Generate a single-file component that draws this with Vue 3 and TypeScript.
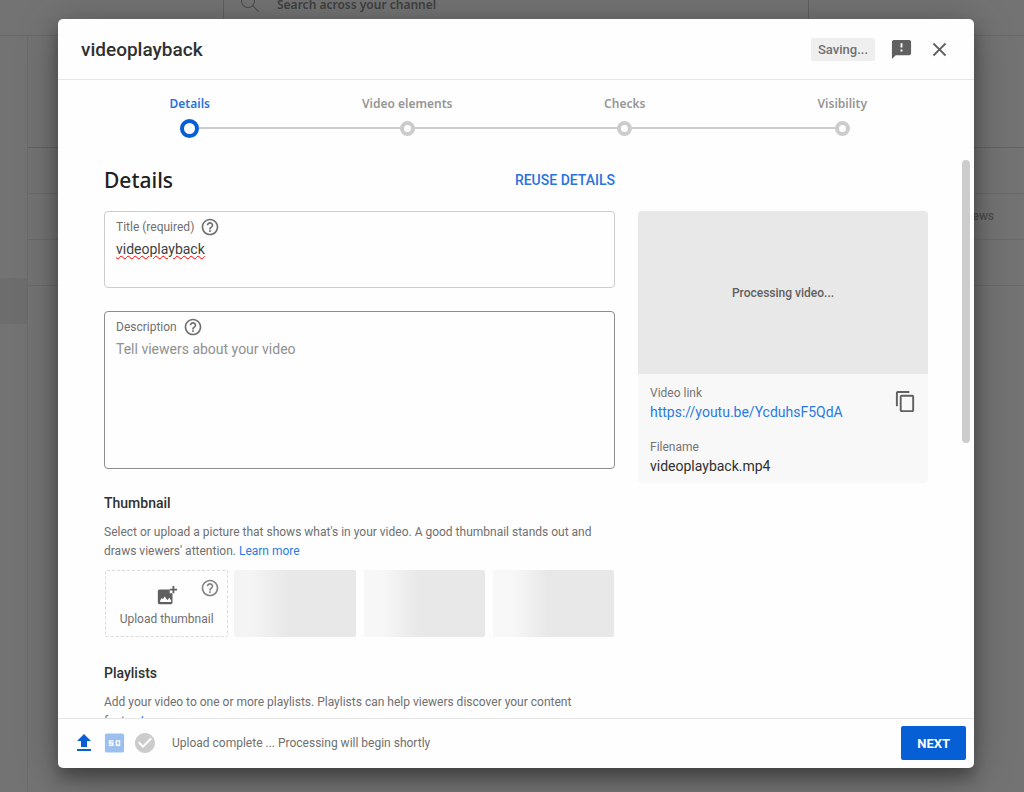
<script setup lang="ts">
import { ref } from 'vue'

interface Step { label: string; active: boolean }

const steps: Step[] = [
  { label: 'Details', active: true },
  { label: 'Video elements', active: false },
  { label: 'Checks', active: false },
  { label: 'Visibility', active: false },
]
const title = ref('videoplayback')
const description = ref('')
const fileName = 'videoplayback.mp4'
const link = 'https://youtu.be/YcduhsF5QdA'
const helpPath = 'M11 18h2v-2h-2v2zm1-16C6.48 2 2 6.48 2 12s4.48 10 10 10 10-4.48 10-10S17.52 2 12 2zm0 18c-4.41 0-8-3.59-8-8s3.59-8 8-8 8 3.59 8 8-3.59 8-8 8zm0-14c-2.21 0-4 1.79-4 4h2c0-1.1.9-2 2-2s2 .9 2 2c0 2-3 1.75-3 5h2c0-2.25 3-2.5 3-5 0-2.21-1.79-4-4-4z'
</script>

<template>
  <div class="studio">
    <div class="page" aria-hidden="true">
      <div class="topbar">
        <div class="search">
          <svg viewBox="0 0 24 24" class="lens"><path d="M20.87 20.17l-5.59-5.59C16.35 13.35 17 11.75 17 10c0-3.87-3.13-7-7-7s-7 3.13-7 7 3.13 7 7 7c1.75 0 3.35-.65 4.58-1.71l5.59 5.59.7-.71zM10 16c-3.31 0-6-2.69-6-6s2.69-6 6-6 6 2.69 6 6-2.69 6-6 6z" /></svg>
          <span>Search across your channel</span>
        </div>
      </div>
      <div class="workspace">
        <div class="rail"><div class="rail-item"></div></div>
        <div class="table">
          <div class="band band-tall"></div>
          <div class="band"></div>
          <div class="band band-head">Views</div>
          <div class="band"></div>
        </div>
      </div>
    </div>

    <div class="overlay">
      <section class="dialog" role="dialog" aria-labelledby="dialog-title">
        <header class="head">
          <h1 id="dialog-title">{{ title }}</h1>
          <span class="saving">Saving...</span>
          <button class="icon-btn feedback" aria-label="Send feedback">
            <svg viewBox="0 0 24 24"><path d="M20 2H4c-1.1 0-2 .9-2 2v18l4-4h14c1.1 0 2-.9 2-2V4c0-1.1-.9-2-2-2zm-7 12h-2v-2h2v2zm0-4h-2V5.500h2V10z" /></svg>
          </button>
          <button class="icon-btn" aria-label="Close">
            <svg viewBox="0 0 24 24"><path d="M19 6.410L17.590 5 12 10.590 6.410 5 5 6.410 10.590 12 5 17.590 6.410 19 12 13.410 17.590 19 19 17.590 13.410 12z" /></svg>
          </button>
        </header>

        <ol class="stepper">
          <li v-for="s in steps" :key="s.label" :class="{ active: s.active }">
            <button>{{ s.label }}</button>
            <span class="track"><i></i><b></b><i></i></span>
          </li>
        </ol>

        <div class="body">
          <div class="scroller">
            <div class="title-row">
              <h2>Details</h2>
              <button class="reuse">REUSE DETAILS</button>
            </div>
            <div class="columns">
              <div class="main">
                <div class="field">
                  <div class="field-label">
                    <label for="title">Title (required)</label>
                    <svg viewBox="0 0 24 24" class="help"><path :d="helpPath" /></svg>
                  </div>
                  <textarea id="title" v-model="title" class="title-input" spellcheck="false"></textarea>
                </div>
                <div class="field strong">
                  <div class="field-label">
                    <label for="desc">Description</label>
                    <svg viewBox="0 0 24 24" class="help"><path :d="helpPath" /></svg>
                  </div>
                  <textarea id="desc" v-model="description" class="desc-input" placeholder="Tell viewers about your video"></textarea>
                </div>

                <h3>Thumbnail</h3>
                <p>Select or upload a picture that shows what's in your video. A good thumbnail stands out and draws viewers' attention. <a href="#">Learn more</a></p>
                <div class="thumbs">
                  <button class="upload">
                    <svg viewBox="0 0 24 24" class="add-photo"><path d="M18 12.500V19c0 1.100-.9 2-2 2H4c-1.100 0-2-.9-2-2V7c0-1.100.9-2 2-2h11v4h3zM4.500 18.500h12v-1.500l-2-3-2 2.500-3-4-2 3-1-1.500-2 3z" fill-rule="evenodd" /><path d="M18 1h2v3h3v2h-3v3h-2V6h-3V4h3z" /></svg>
                    <span>Upload thumbnail</span>
                    <svg viewBox="0 0 24 24" class="help corner"><path :d="helpPath" /></svg>
                  </button>
                  <div v-for="n in 3" :key="n" class="thumb" :class="'thumb-' + n"></div>
                </div>

                <h3>Playlists</h3>
                <p>Add your video to one or more playlists. Playlists can help viewers discover your content faster. <a href="#">Learn more</a></p>
              </div>

              <aside class="preview">
                <div class="player">Processing video...</div>
                <div class="info">
                  <div class="info-row">
                    <div>
                      <div class="caption">Video link</div>
                      <a class="value" href="#">{{ link }}</a>
                    </div>
                    <button class="icon-btn copy" aria-label="Copy video link">
                      <svg viewBox="0 0 24 24"><path d="M16 1H4c-1.100 0-2 .9-2 2v14h2V3h12V1zm3 4H8c-1.100 0-2 .9-2 2v14c0 1.100.9 2 2 2h11c1.100 0 2-.9 2-2V7c0-1.100-.9-2-2-2zm0 16H8V7h11v14z" /></svg>
                    </button>
                  </div>
                  <div class="file">
                    <div class="caption">Filename</div>
                    <div class="value">{{ fileName }}</div>
                  </div>
                </div>
              </aside>
            </div>
          </div>
          <div class="scroll-rail"><div class="scroll-thumb"></div></div>
        </div>

        <footer class="foot">
          <svg viewBox="0 0 24 24" class="status up"><path d="M5 20h14v-2H5v2zm0-10h4v6h6v-6h4l-7-7-7 7z" /></svg>
          <svg viewBox="0 0 24 24" class="status sd"><rect x="2" y="2" width="20" height="20" rx="2" /><path d="M11 9.700H6.700V12H10.300V14.300H6M14 9.700h3.300v4.600H14z" fill="none" stroke="#fff" stroke-width="1.400" /></svg>
          <svg viewBox="0 0 24 24" class="status done"><path d="M12 2C6.480 2 2 6.480 2 12s4.480 10 10 10 10-4.480 10-10S17.520 2 12 2zm-2 15l-5-5 1.410-1.410L10 14.170l7.590-7.590L19 8l-9 9z" /></svg>
          <span class="message">Upload complete ... Processing will begin shortly</span>
          <button class="next">NEXT</button>
        </footer>
      </section>
    </div>
  </div>
</template>

<style>
body { margin: 0; }
</style>

<style scoped>
* { box-sizing: border-box; }
button { font: inherit; color: inherit; background: none; border: 0; padding: 0; margin: 0; cursor: pointer; }
a { color: #2a7ae2; text-decoration: none; }
svg { display: block; fill: currentColor; flex: none; }
h1, h2, h3, p, ol { margin: 0; padding: 0; }

.studio { position: relative; height: 100vh; min-height: 600px; overflow: hidden; font-family: Roboto, "Liberation Sans", sans-serif; color: #606060; background: #737373; }

.page { height: 100%; display: flex; flex-direction: column; }
.topbar { height: 36px; flex: none; padding: 0 215px 0 223px; border-bottom: 1px solid #686868; }
.search { height: 35px; display: flex; gap: 15px; padding-left: 14px; border: 1px solid #5e5e5e; border-width: 0 1px; font: 600 12px/20px "Noto Sans", sans-serif; color: #404040; }
.search span { margin-top: -5px; }
.lens { width: 24px; height: 24px; margin-top: -9px; color: #4b4b4b; }
.workspace { flex: 1; display: flex; }
.rail { width: 28px; border-right: 1px solid #6b6b6b; padding-top: 242px; }
.rail-item { height: 46px; background: #6d6d6d; }
.table { flex: 1; }
.band { height: 46px; border-bottom: 1px solid #6a6a6a; }
.band-tall { height: 112px; border-color: #636363; }
.band-head { padding-right: 30px; text-align: right; font-size: 12px; font-weight: 500; line-height: 44px; color: #4c4c4c; }

.overlay { position: absolute; inset: 0; padding: 19px 50px 24px 58px; }
.dialog { height: 100%; display: flex; flex-direction: column; background: #fefefe; border-radius: 5px; overflow: hidden; box-shadow: 0 10px 16px rgba(0, 0, 0, .3), 0 6px 40px rgba(0, 0, 0, .27); }

.head { height: 61px; flex: none; display: flex; align-items: center; padding: 0 23px; border-bottom: 1px solid #e5e5e5; }
h1 { flex: 1; font-size: 19px; font-weight: 500; color: #303030; }
.saving { padding: 0 7px; line-height: 23px; font-size: 13px; font-weight: 500; color: #707070; background: #efefef; border-radius: 2px; }
.icon-btn { color: #606060; }
.icon-btn svg { width: 23px; height: 23px; }
.feedback { margin: 0 15px; }

.stepper { flex: none; height: 66px; display: grid; grid-template-columns: repeat(4, 1fr); padding: 14px 23px 0; list-style: none; }
li { display: flex; flex-direction: column; align-items: center; gap: 4px; }
li button { font: 600 12px/20px "Noto Sans", sans-serif; color: #969696; }
.track { align-self: stretch; height: 20px; display: flex; align-items: center; }
.track i { flex: 1; height: 2px; background: #ccc; }
.track b { width: 15px; height: 15px; border: 4px solid #ccc; border-radius: 50%; }
li:first-child i:first-child, li:last-child i:last-child { background: none; }
li.active button { color: #2a72dc; }
li.active b { width: 19px; height: 19px; border-color: #065fd4; }

.body { flex: 1; min-height: 0; display: flex; }
.scroller { flex: 1; min-width: 0; overflow: hidden; padding: 19px 34px 0 46px; }
.scroll-rail { width: 12px; padding: 14px 3px 0 0; }
.scroll-thumb { width: 8px; height: 283px; border-radius: 4px; background: #ccc; }
.title-row { display: flex; justify-content: space-between; align-items: center; width: calc(100% - 313px); height: 30px; margin-bottom: 16px; }
h2 { font: 500 21px/30px "Noto Sans", sans-serif; color: #202020; }
.reuse { font-size: 14px; font-weight: 500; color: #2a72dc; }
.columns { display: grid; grid-template-columns: 1fr 290px; gap: 23px; align-items: start; }

.field { border: 1px solid #ccc; border-radius: 4px; padding: 6px 11px 0; margin-bottom: 23px; }
.field.strong { border-color: #8d8d8d; }
.field-label { display: flex; align-items: center; gap: 6px; height: 18px; font-size: 12px; color: #707070; }
.help { width: 20px; height: 20px; }
textarea { display: block; width: 100%; padding: 0; border: 0; outline: 0; resize: none; background: none; font: 14px/22px Roboto, sans-serif; color: #404040; }
textarea::placeholder { color: #909090; opacity: 1; }
.title-input { height: 49px; margin-top: 2px; text-decoration: underline wavy #f00 1px; text-underline-offset: 1px; }
.desc-input { height: 130px; margin-top: 2px; }

h3 { font-size: 14px; font-weight: 500; line-height: 22px; color: #303030; }
p { font-size: 12px; line-height: 19px; margin-top: 9px; padding-right: 16px; color: #707070; }
.thumbs { display: grid; grid-template-columns: repeat(4, 1fr); gap: 8px; padding: 0 1px; margin: 9px 0 25px; }
.upload { position: relative; width: calc(100% + 2px); height: 67px; display: flex; flex-direction: column; align-items: center; gap: 3px; padding-top: 14px; border: 1px dashed #dadada; border-radius: 2px; font-size: 12px; line-height: 18px; color: #707070; }
.add-photo { width: 22px; height: 22px; color: #606060; }
.corner { position: absolute; top: 7px; right: 7px; color: #858585; }
.thumb { height: 67px; border-radius: 2px; }
.thumb-1 { background: linear-gradient(90deg, #f4f4f4 15%, #e8e8e8 45%); }
.thumb-2 { background: linear-gradient(90deg, #f7f7f7 15%, #e8e8e8 45%); }
.thumb-3 { background: linear-gradient(90deg, #f8f8f8 15%, #e8e8e8 45%); }

.preview { border-radius: 4px; overflow: hidden; background: #f8f8f8; }
.player { height: 163px; display: flex; align-items: center; justify-content: center; background: #e8e8e8; font-size: 12px; font-weight: 500; }
.info { padding: 10px 11px 7px 12px; }
.info-row { display: flex; justify-content: space-between; align-items: flex-start; }
.copy { margin-top: 6px; }
.caption { font-size: 12px; line-height: 18px; color: #757575; }
.value { display: block; font-size: 14px; line-height: 20px; }
div.value { color: #303030; }
.file { margin-top: 16px; }

.foot { height: 50px; flex: none; display: flex; align-items: center; padding: 0 8px 1px 14px; border-top: 1px solid #e5e5e5; }
.status { width: 24px; height: 24px; margin-right: 7px; }
.up { color: #065fd4; }
.sd { color: #9bbfee; width: 23px; }
.done { color: #ccc; }
.message { flex: 1; margin-left: 8px; font-size: 12px; color: #707070; }
.next { height: 34px; padding: 0 16px; border-radius: 2px; background: #065fd4; color: #fff; font-size: 13px; font-weight: 700; }
</style>
